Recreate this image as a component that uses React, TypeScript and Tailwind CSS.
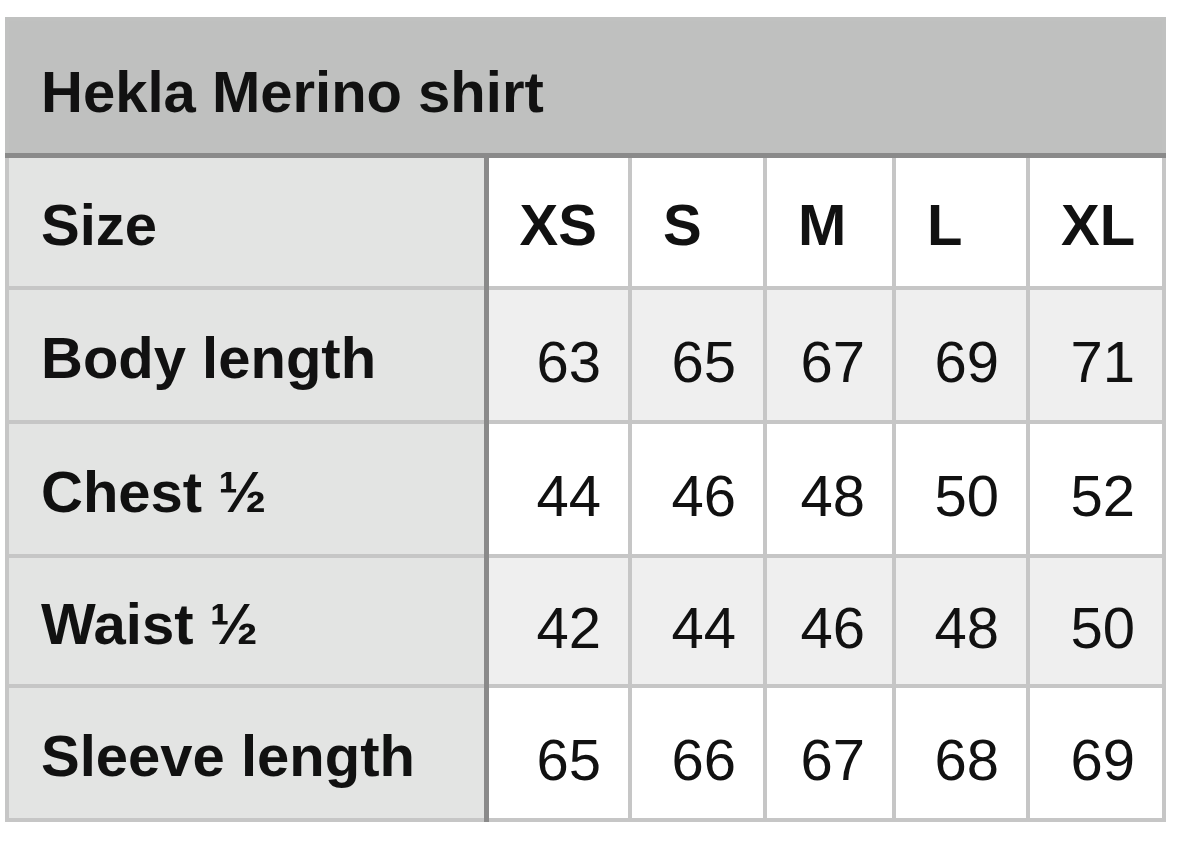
const SIZES = ['XS', 'S', 'M', 'L', 'XL'];

const ROWS: { label: string; values: number[] }[] = [
  { label: 'Body length', values: [63, 65, 67, 69, 71] },
  { label: 'Chest ½', values: [44, 46, 48, 50, 52] },
  { label: 'Waist ½', values: [42, 44, 46, 48, 50] },
  { label: 'Sleeve length', values: [65, 66, 67, 68, 69] },
];

export default function App() {
  return (
    <div className="min-h-[845px] bg-white pt-[17px] pl-[5px] font-['Liberation_Sans',Arial,sans-serif] text-[58px] leading-none text-[#111]">
      <table className="w-[1157px] table-fixed border-collapse">
        <colgroup>
          <col className="w-[479px]" />
          <col className="w-[144px]" />
          <col className="w-[135px]" />
          <col className="w-[129px]" />
          <col className="w-[134px]" />
          <col className="w-[136px]" />
        </colgroup>
        <thead>
          <tr className="h-[136px]">
            <th
              colSpan={6}
              className="border-4 border-[#c0c1c0] border-b-[5px] border-b-[#8a8a8a] bg-[#bfc0bf] pl-[32px] pt-[11px] text-left align-middle font-bold"
            >
              Hekla Merino shirt
            </th>
          </tr>
        </thead>
        <tbody>
          <tr className="h-[133px]">
            <th className="border-4 border-[#c6c6c6] border-r-[5px] border-r-[#8a8a8a] bg-[#e3e4e3] pl-[32px] pt-[6px] text-left align-middle font-bold">
              Size
            </th>
            {SIZES.map((s) => (
              <th key={s} className="border-4 border-[#c6c6c6] bg-white pl-[31px] pt-[6px] text-left align-middle font-bold">
                {s}
              </th>
            ))}
          </tr>
          {ROWS.map((row, i) => (
            <tr key={row.label} className={i === 2 ? 'h-[130px]' : 'h-[134px]'}>
              <th className="border-4 border-[#c6c6c6] border-r-[5px] border-r-[#8a8a8a] bg-[#e3e4e3] pl-[32px] pt-[6px] text-left align-middle font-bold">
                {row.label}
              </th>
              {row.values.map((v, j) => (
                <td
                  key={j}
                  className={`border-4 border-[#c6c6c6] pr-[27px] pt-[14px] text-right align-middle font-normal ${i % 2 === 0 ? 'bg-[#efefef]' : 'bg-white'}`}
                >
                  {v}
                </td>
              ))}
            </tr>
          ))}
        </tbody>
      </table>
    </div>
  );
}
